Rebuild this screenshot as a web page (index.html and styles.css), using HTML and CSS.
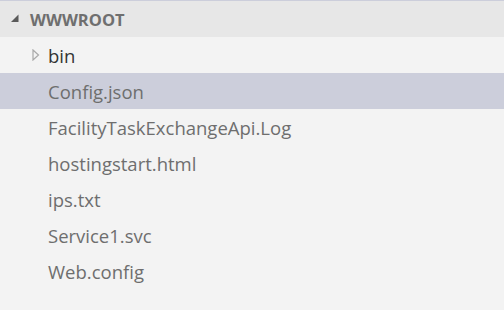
FILE: index.html
```html
<!DOCTYPE html>
<html lang="en">
<head>
  <meta charset="UTF-8" />
  <title>Explorer</title>
  <link rel="stylesheet" href="styles.css">
</head>
<body>

  <!-- Explorer section -->
  <div class="explorer">
    <div class="section-header">
      <svg class="twistie-open" width="10" height="10" viewBox="0 0 10 10">
        <polygon points="8.5,1.5 8.5,9 1,9" fill="#5a5a5a" />
      </svg>
      <span>WWWROOT</span>
    </div>

    <ul class="tree">
      <li class="row folder">
        <svg class="twistie" width="8" height="12" viewBox="0 0 8 12">
          <polygon points="1,1 6.5,6 1,11" fill="none" stroke="#a8a8a8" stroke-width="1.2" />
        </svg>
        <span>bin</span>
      </li>
      <li class="row file selected"><span>Config.json</span></li>
      <li class="row file"><span>FacilityTaskExchangeApi.Log</span></li>
      <li class="row file"><span>hostingstart.html</span></li>
      <li class="row file"><span>ips.txt</span></li>
      <li class="row file"><span>Service1.svc</span></li>
      <li class="row file"><span>Web.config</span></li>
    </ul>
  </div>

</body>
</html>
```

FILE: styles.css
```css
* {
  margin: 0;
  padding: 0;
  box-sizing: border-box;
}

body {
  font-family: 'Open Sans', 'Noto Sans', sans-serif;
  background-color: #f3f3f3;
  width: 504px;
  height: 310px;
  overflow: hidden;
}

.explorer {
  border-top: 1px solid #cccedb;
}

.section-header {
  height: 36px;
  display: flex;
  align-items: center;
  background-color: #e7e7e7;
  padding-left: 10px;
  font-size: 16.5px;
  font-weight: 700;
  color: #6f6f6f;
}

.twistie-open {
  margin-right: 10px;
  margin-top: -2px;
}

.tree {
  list-style: none;
}

.row {
  height: 36px;
  display: flex;
  align-items: center;
  padding-left: 48px;
  font-size: 18.5px;
  color: #6e6e6e;
}

.row.folder {
  padding-left: 32px;
  color: #333333;
}

.twistie {
  margin-right: 8px;
}

.row.selected {
  background-color: #cccedb;
}
```
